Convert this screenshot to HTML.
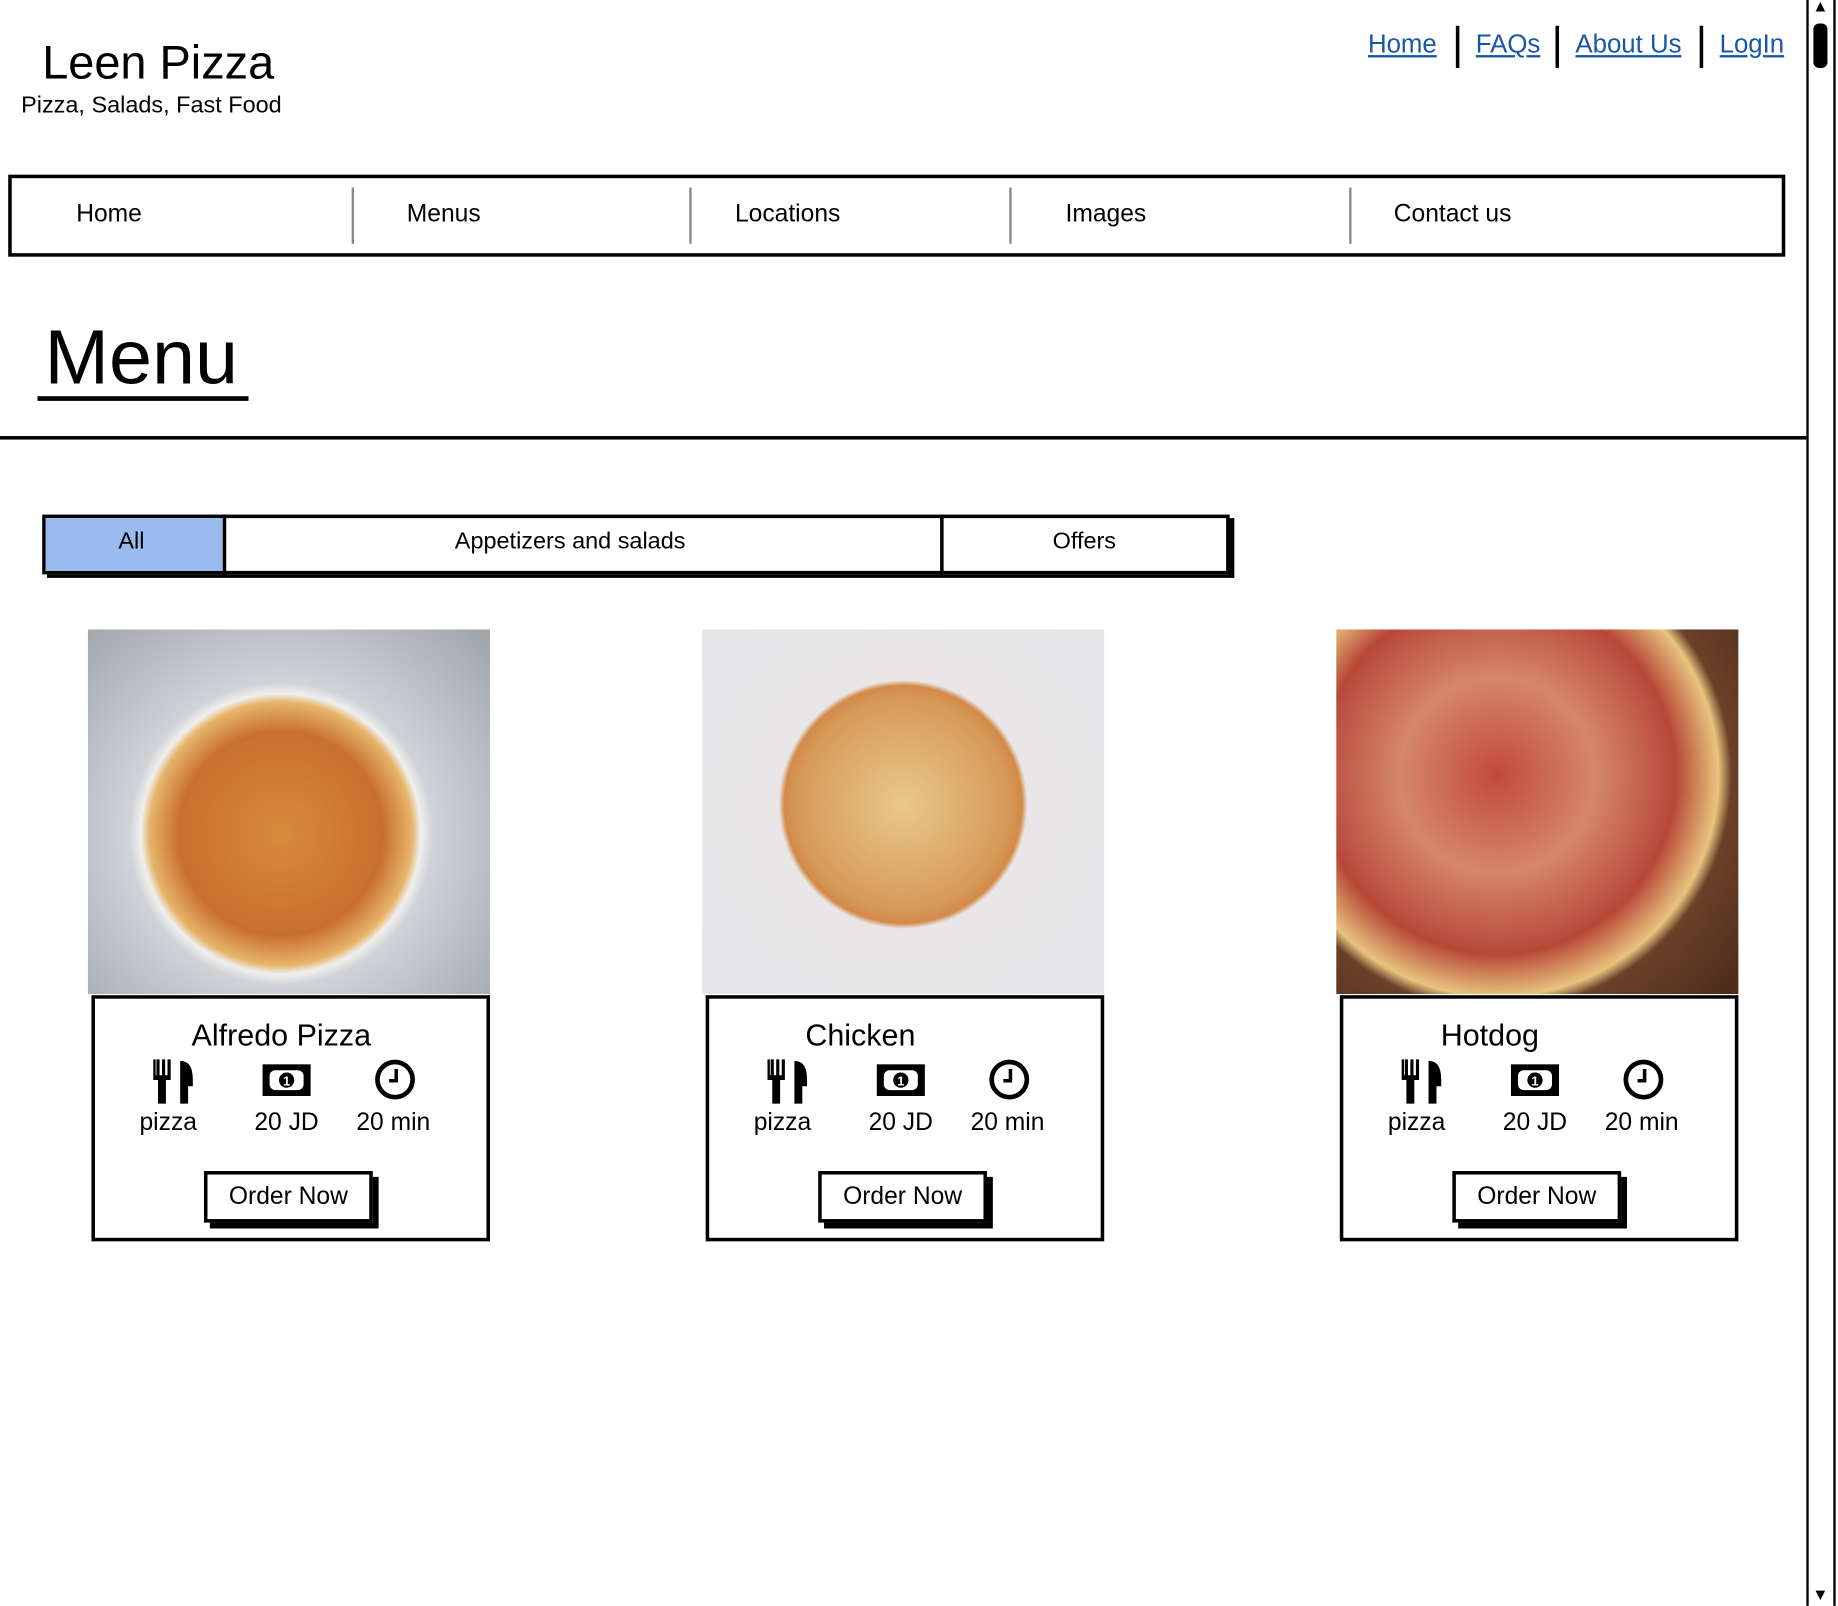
<!DOCTYPE html>
<html><head><meta charset="utf-8"><style>
html,body{margin:0;padding:0;background:#fff;overflow:hidden}
body{width:1838px;height:1606px;position:relative}
#w{position:absolute;left:0;top:0;width:1568px;height:1370px;transform:scale(1.17219);transform-origin:0 0;font-family:"Liberation Sans",sans-serif;color:#000}
.a{position:absolute;white-space:nowrap}
.lnk{color:#1a56a8;text-decoration:underline;font-size:22px;top:25px}
.bar{position:absolute;top:22px;width:3px;height:36px;background:#000}
.nav{font-size:21px;top:171px}
.sep{position:absolute;top:160px;width:2px;height:48px;background:#888}
.img{position:absolute;top:537px;width:343px;height:311px;overflow:hidden}
.card{position:absolute;top:849px;width:334px;height:204px;border:3px solid #000;border-top-width:3px}
.card .t{position:absolute;top:16px;width:100%;text-align:center;font-size:26px}
.card .l{position:absolute;top:94px;font-size:21px}
.btn{position:absolute;left:95px;top:147px;width:138px;height:38px;border:3px solid #000;box-shadow:5px 5px 0 #000;font-size:21px;text-align:center;line-height:38px;background:#fff}
</style></head><body><div id="w">
<div class="a" style="left:36px;top:32px;font-size:40px">Leen Pizza</div>
<div class="a" style="left:18px;top:79px;font-size:20px">Pizza, Salads, Fast Food</div>
<div class="a lnk" style="left:1167px">Home</div><div class="bar" style="left:1242px"></div>
<div class="a lnk" style="left:1259px">FAQs</div><div class="bar" style="left:1327px"></div>
<div class="a lnk" style="left:1344px">About Us</div><div class="bar" style="left:1450px"></div>
<div class="a lnk" style="left:1467px">LogIn</div>
<div style="position:absolute;left:7px;top:149px;width:1510px;height:64px;border:3px solid #000"></div>
<div class="a nav" style="left:65px">Home</div><div class="sep" style="left:300px"></div>
<div class="a nav" style="left:347px">Menus</div><div class="sep" style="left:588px"></div>
<div class="a nav" style="left:627px">Locations</div><div class="sep" style="left:861px"></div>
<div class="a nav" style="left:909px">Images</div><div class="sep" style="left:1151px"></div>
<div class="a nav" style="left:1189px">Contact us</div>
<div class="a" style="left:38px;top:266px;font-size:66px">Menu</div>
<div style="position:absolute;left:32px;top:338px;width:180px;height:4px;background:#000"></div>
<div style="position:absolute;left:0;top:372px;width:1541px;height:3px;background:#000"></div>
<div style="position:absolute;left:36px;top:439px;width:1007px;height:45px;border:3px solid #000;box-shadow:4px 3px 0 #000"></div>
<div style="position:absolute;left:39px;top:442px;width:151px;height:45px;background:#99bbee"></div>
<div style="position:absolute;left:190px;top:439px;width:3px;height:51px;background:#000"></div>
<div style="position:absolute;left:802px;top:439px;width:3px;height:51px;background:#000"></div>
<div class="a" style="left:101px;top:451px;font-size:20px">All</div>
<div class="a" style="left:388px;top:451px;font-size:20px">Appetizers and salads</div>
<div class="a" style="left:898px;top:451px;font-size:20px">Offers</div>

<div class="img" style="left:75px;background:radial-gradient(circle at 48% 56%,#d88a3c 0,#c9702f 35%,#e6b46a 45%,#f0efee 48%,#cfd2d6 52%,#9ea3a8 100%)"></div>
<div class="img" style="left:599px;background:radial-gradient(circle at 50% 48%,#e9c98a 0,#d79a5a 38%,#d38a48 43%,#e8e6e7 45%,#e6e6e8 100%)"></div>
<div class="img" style="left:1140px;background:radial-gradient(circle at 40% 40%,#c24a3a 0,#d5876a 30%,#b84838 55%,#e7c47e 68%,#6b4028 72%,#4a2a1a 100%)"></div>

<svg width="0" height="0" style="position:absolute"><defs>
<g id="ic">
<g transform="translate(-3,-5) scale(1.35)">
<path d="M5 5v13h3v15h5V18h3V5h-2v10h-1.5V5h-2v10H9V5H7v10H6.5V5z" fill="#000"/>
<path d="M22 6c5 0 8 3 8 12v4h-3v11h-5z" fill="#000"/>
</g>
<rect x="97" y="6" width="41" height="27" fill="#000"/><rect x="103" y="11" width="29" height="17" rx="5" fill="#fff"/><circle cx="117.5" cy="19.5" r="6.5" fill="#000"/><text x="117.5" y="24" font-size="11" font-weight="bold" fill="#fff" text-anchor="middle" font-family="Liberation Sans">1</text>
<circle cx="210" cy="19" r="15" fill="none" stroke="#000" stroke-width="4"/><path d="M211 10v10h-6" fill="none" stroke="#000" stroke-width="3"/>
</g></defs></svg>

<div class="card" style="left:78px"><div class="t" style="left:-8px">Alfredo Pizza</div>
<svg style="position:absolute;left:46px;top:50px" width="240" height="42"><use href="#ic"/></svg>
<div class="l" style="left:38px">pizza</div><div class="l" style="left:136px">20 JD</div><div class="l" style="left:223px">20 min</div>
<div class="btn" style="left:93px">Order Now</div></div>
<div class="card" style="left:602px"><div class="t" style="left:-38px">Chicken</div>
<svg style="position:absolute;left:46px;top:50px" width="240" height="42"><use href="#ic"/></svg>
<div class="l" style="left:38px">pizza</div><div class="l" style="left:136px">20 JD</div><div class="l" style="left:223px">20 min</div>
<div class="btn" style="left:93px">Order Now</div></div>
<div class="card" style="left:1143px"><div class="t" style="left:-42px">Hotdog</div>
<svg style="position:absolute;left:46px;top:50px" width="240" height="42"><use href="#ic"/></svg>
<div class="l" style="left:38px">pizza</div><div class="l" style="left:136px">20 JD</div><div class="l" style="left:223px">20 min</div>
<div class="btn" style="left:93px">Order Now</div></div>

<div style="position:absolute;left:1541px;top:0;width:2px;height:1370px;background:#000"></div>
<div style="position:absolute;left:1564px;top:0;width:2px;height:1370px;background:#000"></div>
<div style="position:absolute;left:1547px;top:20px;width:12px;height:38px;border-radius:5px;background:#000"></div>
<div class="a" style="left:1546px;top:-3px;font-size:14px">▲</div>
<div class="a" style="left:1546px;top:1352px;font-size:14px">▼</div>
</div></body></html>
